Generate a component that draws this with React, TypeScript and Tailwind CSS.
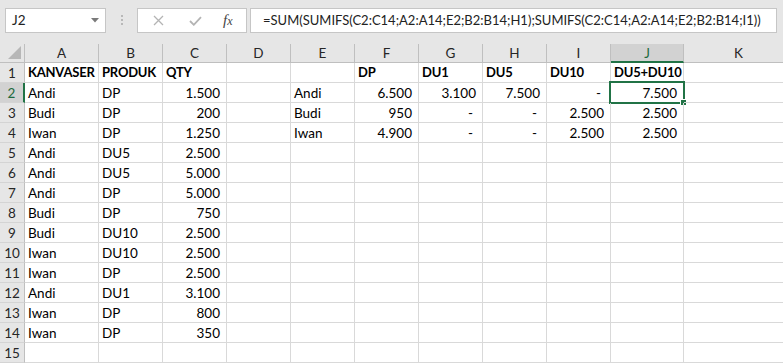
import React from "react";

type Cell = { v: string; bold?: boolean; num?: boolean };

const COLS = ["A", "B", "C", "D", "E", "F", "G", "H", "I", "J", "K"];

const t = (v: string): Cell => ({ v });
const b = (v: string): Cell => ({ v, bold: true });
const n = (v: string): Cell => ({ v, num: true });
const e: Cell = { v: "" };

const ROWS: Cell[][] = [
  [b("KANVASER"), b("PRODUK"), b("QTY"), e, e, b("DP"), b("DU1"), b("DU5"), b("DU10"), b("DU5+DU10"), e],
  [t("Andi"), t("DP"), n("1.500"), e, t("Andi"), n("6.500"), n("3.100"), n("7.500"), n("-"), n("7.500"), e],
  [t("Budi"), t("DP"), n("200"), e, t("Budi"), n("950"), n("-"), n("-"), n("2.500"), n("2.500"), e],
  [t("Iwan"), t("DP"), n("1.250"), e, t("Iwan"), n("4.900"), n("-"), n("-"), n("2.500"), n("2.500"), e],
  [t("Andi"), t("DU5"), n("2.500"), e, e, e, e, e, e, e, e],
  [t("Andi"), t("DU5"), n("5.000"), e, e, e, e, e, e, e, e],
  [t("Andi"), t("DP"), n("5.000"), e, e, e, e, e, e, e, e],
  [t("Budi"), t("DP"), n("750"), e, e, e, e, e, e, e, e],
  [t("Budi"), t("DU10"), n("2.500"), e, e, e, e, e, e, e, e],
  [t("Iwan"), t("DU10"), n("2.500"), e, e, e, e, e, e, e, e],
  [t("Iwan"), t("DP"), n("2.500"), e, e, e, e, e, e, e, e],
  [t("Andi"), t("DU1"), n("3.100"), e, e, e, e, e, e, e, e],
  [t("Iwan"), t("DP"), n("800"), e, e, e, e, e, e, e, e],
  [t("Iwan"), t("DP"), n("350"), e, e, e, e, e, e, e, e],
  [e, e, e, e, e, e, e, e, e, e, e],
];

const FONT = { fontFamily: "Lato, 'Open Sans', sans-serif" };

function FormulaBar() {
  return (
    <div className="flex h-[44px] items-start bg-[#e6e6e6]">
      {/* name box */}
      <div className="ml-[5px] mt-[8px] flex h-[25px] w-[101px] items-center border border-[#c6c6c6] bg-white pl-[6px] pr-[6px]">
        <span className="flex-1 text-[13.5px] text-[#222]">J2</span>
        <svg width="8" height="5" viewBox="0 0 8 5">
          <path d="M0 0 L8 0 L4 4.5 Z" fill="#7a7a7a" />
        </svg>
      </div>
      {/* grip dots */}
      <div className="ml-[15px] mt-[15px] flex w-[2px] flex-col gap-[2px]">
        <span className="h-[2px] w-[2px] bg-[#b8b8b8]" />
        <span className="h-[2px] w-[2px] bg-[#b8b8b8]" />
        <span className="h-[2px] w-[2px] bg-[#b8b8b8]" />
      </div>
      {/* cancel / enter / insert function */}
      <div className="ml-[14px] mt-[8px] flex h-[25px] w-[110px] items-center border border-[#c6c6c6] bg-white">
        <svg className="ml-[15px]" width="11" height="11" viewBox="0 0 11 11">
          <path d="M1 1 L10 10 M10 1 L1 10" stroke="#b4b4b4" strokeWidth="1.3" fill="none" />
        </svg>
        <svg className="ml-[25px]" width="13" height="10" viewBox="0 0 13 10">
          <path d="M1 5 L4.8 8.8 L12 1.2" stroke="#b4b4b4" strokeWidth="1.8" fill="none" />
        </svg>
        <span
          className="ml-[21px] text-[15px] italic text-[#444]"
          style={{ fontFamily: "'Liberation Serif', 'DejaVu Serif', serif" }}
        >
          f<span className="text-[12px]">x</span>
        </span>
      </div>
      {/* formula input */}
      <div className="ml-[3px] mt-[8px] flex h-[25px] w-[527px] items-center border border-[#c6c6c6] bg-white pl-[12px]">
        <span className="whitespace-nowrap text-[13px] text-[#222]">
          =SUM(SUMIFS(C2:C14;A2:A14;E2;B2:B14;H1);SUMIFS(C2:C14;A2:A14;E2;B2:B14;I1))
        </span>
      </div>
    </div>
  );
}

function ColumnHeaders() {
  return (
    <>
      <div className="relative h-[19px] border-b border-r border-[#bfbfbf] bg-[#e6e6e6]">
        <svg className="absolute bottom-[3px] right-[3px]" width="13" height="13" viewBox="0 0 13 13">
          <path d="M13 0 L13 13 L0 13 Z" fill="#b7b7b7" />
        </svg>
      </div>
      {COLS.map((c) =>
        c === "J" ? (
          <div
            key={c}
            className="flex h-[19px] items-center justify-center border-b-2 border-r border-b-[#217346] border-r-[#bfbfbf] bg-[#d2d2d2] pt-[1px] text-[13.5px] text-[#1e6b40]"
          >
            {c}
          </div>
        ) : (
          <div
            key={c}
            className="flex h-[19px] items-center justify-center border-b border-r border-[#bfbfbf] bg-[#e6e6e6] pt-[1px] text-[13.5px] text-[#262626]"
          >
            {c}
          </div>
        )
      )}
    </>
  );
}

function GridRow({ cells, index }: { cells: Cell[]; index: number }) {
  const active = index === 2;
  return (
    <>
      {active ? (
        <div className="flex h-[20px] items-center justify-center border-b border-r-2 border-b-[#d4d4d4] border-r-[#217346] bg-[#d2d2d2] pt-[1px] text-[13.5px] text-[#1e6b40]">
          {index}
        </div>
      ) : (
        <div className="flex h-[20px] items-center justify-center border-b border-r border-b-[#d4d4d4] border-r-[#bfbfbf] bg-[#e6e6e6] pt-[1px] text-[13.5px] text-[#262626]">
          {index}
        </div>
      )}
      {cells.map((cell, ci) => {
        const selected = active && COLS[ci] === "J";
        const dash = cell.v === "-";
        return (
          <div
            key={ci}
            className={`relative flex h-[20px] items-center overflow-visible whitespace-nowrap border-b border-r border-[#d9d9d9] pt-[1px] text-black ${
              cell.num ? "justify-end" : "justify-start pl-[3px]"
            } ${cell.num && dash ? "pr-[9px]" : cell.num ? "pr-[6px]" : ""} ${
              cell.bold ? "text-[13px] font-bold tracking-[-0.2px]" : "text-[13.5px]"
            }`}
          >
            {cell.v}
            {selected && (
              <>
                <div className="pointer-events-none absolute bottom-[-2px] left-[-2px] right-[-2px] top-[-2px] border-2 border-[#217346]" />
                <div className="absolute bottom-[-4px] right-[-4px] h-[7px] w-[7px] border border-white bg-[#217346]" />
              </>
            )}
          </div>
        );
      })}
    </>
  );
}

export default function App() {
  return (
    <div className="h-[364px] w-[783px] overflow-hidden bg-white" style={FONT}>
      <FormulaBar />
      <div className="grid grid-cols-[25px_74px_64px_64px_64px_64px_64px_64px_64px_64px_73px_110px]">
        <ColumnHeaders />
        {ROWS.map((cells, i) => (
          <GridRow key={i} cells={cells} index={i + 1} />
        ))}
      </div>
    </div>
  );
}
